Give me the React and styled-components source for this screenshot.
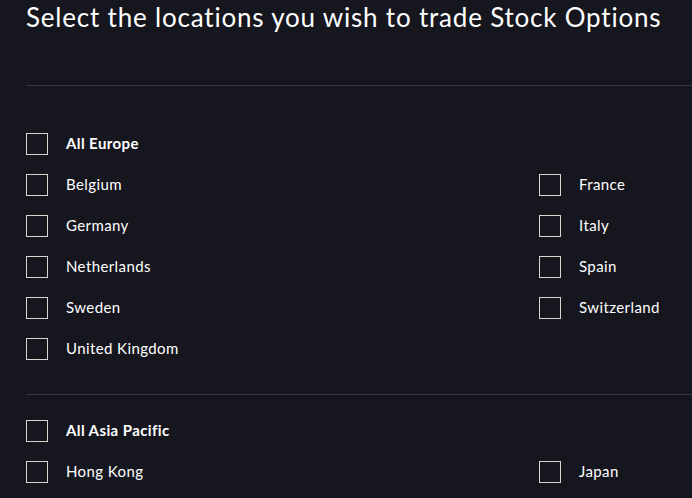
import React from "react";
import styled, { createGlobalStyle } from "styled-components";

const GlobalStyle = createGlobalStyle`
  html, body {
    margin: 0;
    padding: 0;
    background: #16161e;
    overflow: hidden;
  }
  body {
    font-family: Lato, "Open Sans", sans-serif;
    color: #ffffff;
  }
`;

const regions = [
  {
    all: "All Europe",
    countries: [
      ["Belgium", "France"],
      ["Germany", "Italy"],
      ["Netherlands", "Spain"],
      ["Sweden", "Switzerland"],
      ["United Kingdom", null],
    ],
  },
  {
    all: "All Asia Pacific",
    countries: [["Hong Kong", "Japan"]],
  },
];

const Page = styled.div`
  padding-left: 26px;
  overflow: hidden;
`;

const Title = styled.h1`
  margin: 0;
  font-size: 26px;
  font-weight: 400;
  line-height: 34px;
  letter-spacing: 0.8px;
  white-space: nowrap;
  height: 86px;
  border-bottom: 1px solid #38383e;
  box-sizing: border-box;
`;

const Section = styled.div`
  display: grid;
  grid-template-columns: 513px 1fr;
  row-gap: 19px;
  padding-top: ${({ $first }) => ($first ? "47px" : "25px")};
  padding-bottom: 34px;
  border-bottom: 1px solid #38383e;
`;

const Option = styled.label`
  display: flex;
  align-items: center;
  gap: 18px;
  height: 22px;
  white-space: nowrap;
  grid-column: ${({ $full }) => ($full ? "1 / -1" : "auto")};
`;

const Box = styled.span`
  width: 22px;
  height: 22px;
  box-sizing: border-box;
  border: 1px solid #d8d4ce;
  flex-shrink: 0;
`;

const Label = styled.span`
  font-size: 15px;
  letter-spacing: 0.4px;
  margin-top: -2px;
  font-weight: ${({ $bold }) => ($bold ? 700 : 400)};
  color: #ffffff;
`;

const Check = ({ label, bold, full }) => (
  <Option $full={full}>
    <Box />
    <Label $bold={bold}>{label}</Label>
  </Option>
);

export default function App() {
  return (
    <>
      <GlobalStyle />
      <Page>
        <Title>Select the locations you wish to trade Stock Options</Title>
        {regions.map((r, i) => (
          <Section key={r.all} $first={i === 0}>
            <Check label={r.all} bold full />
            {r.countries.map(([a, b]) => (
              <React.Fragment key={a}>
                <Check label={a} />
                {b ? <Check label={b} /> : <span />}
              </React.Fragment>
            ))}
          </Section>
        ))}
      </Page>
    </>
  );
}
